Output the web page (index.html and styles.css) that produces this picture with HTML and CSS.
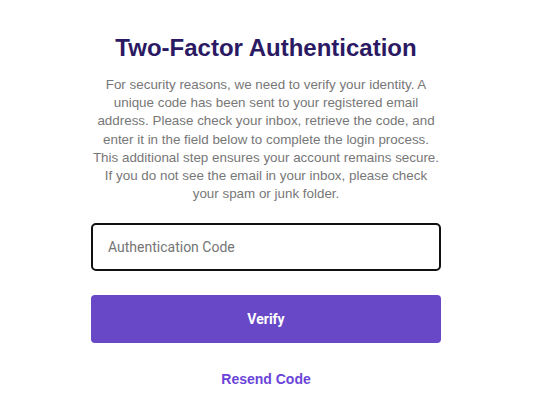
FILE: index.html
```html
<!DOCTYPE html>
<html>
<head>
<meta charset="utf-8">
<link rel="stylesheet" href="styles.css">
</head>
<body>
<div class="page">
  <div class="card">
    <h1 class="title">Two-Factor Authentication</h1>
    <p class="desc">For security reasons, we need to verify your identity. A unique code has been sent to your registered email address. Please check your inbox, retrieve the code, and enter it in the field below to complete the login process. This additional step ensures your account remains secure. If you do not see the email in your inbox, please check your spam or junk folder.</p>
    <input class="code" type="text" placeholder="Authentication Code">
    <button class="verify">Verify</button>
    <a class="resend" href="#">Resend Code</a>
  </div>
</div>
</body>
</html>
```
FILE: styles.css
```css
html, body {
  margin: 0;
  padding: 0;
  background: #ffffff;
}
.page {
  display: flex;
  justify-content: center;
  padding-right: 12px;
}
.card {
  width: 350px;
  display: flex;
  flex-direction: column;
  align-items: center;
  padding-top: 33px;
}
.title {
  margin: 0;
  font-family: "Liberation Sans", Arial, sans-serif;
  font-weight: bold;
  font-size: 24px;
  line-height: 30px;
  color: #2b1a63;
  white-space: nowrap;
}
.desc {
  margin: 13px 0 0;
  font-family: "Liberation Sans", Arial, sans-serif;
  font-size: 13.4px;
  line-height: 18.2px;
  color: #777777;
  text-align: center;
}
.code {
  box-sizing: border-box;
  width: 350px;
  height: 48px;
  margin-top: 20px;
  border: 2px solid #111111;
  border-radius: 5px;
  padding: 0 15px;
  font-family: Roboto, sans-serif;
  font-size: 14px;
  color: #333;
  outline: none;
}
.code::placeholder {
  color: #757575;
}
.verify {
  box-sizing: border-box;
  width: 350px;
  height: 48px;
  margin-top: 24px;
  border: none;
  border-radius: 4px;
  background: #6848c6;
  color: #ffffff;
  font-family: Roboto, sans-serif;
  font-weight: bold;
  font-size: 14px;
}
.resend {
  margin-top: 28px;
  font-family: "Liberation Sans", Arial, sans-serif;
  font-weight: bold;
  font-size: 14px;
  color: #6a44d8;
  text-decoration: none;
}
```
